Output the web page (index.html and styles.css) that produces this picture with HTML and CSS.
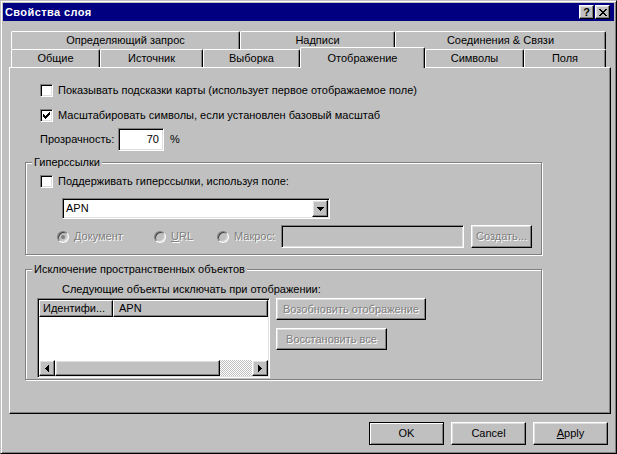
FILE: index.html
```html
<!DOCTYPE html>
<html lang="ru">

<head>
    <meta charset="UTF-8">
    <title>Свойства слоя</title>
    <link rel="stylesheet" href="styles.css">
</head>

<body>
    <div class="window">
        <div class="titlebar">
            <span class="title">Свойства слоя</span>
            <span class="title-btn help">?</span>
            <span class="title-btn">
                <svg width="8" height="7" viewBox="0 0 8 7" shape-rendering="crispEdges">
                    <path d="M0 0h2v1h-2zM6 0h2v1h-2zM1 1h2v1h-2zM5 1h2v1h-2zM2 2h4v1h-4zM3 3h2v1h-2zM2 4h4v1h-4zM1 5h2v1h-2zM5 5h2v1h-2zM0 6h2v1h-2zM6 6h2v1h-2z" fill="#000"/>
                </svg>
            </span>
        </div>

        <div class="dialog-body">
            <div class="tabs">
                <div class="tab-row back">
                    <div class="tab">Определяющий запрос</div>
                    <div class="tab">Надписи</div>
                    <div class="tab">Соединения &amp; Связи</div>
                </div>
                <div class="tab-row front">
                    <div class="tab">Общие</div>
                    <div class="tab">Источник</div>
                    <div class="tab">Выборка</div>
                    <div class="tab active">Отображение</div>
                    <div class="tab">Символы</div>
                    <div class="tab">Поля</div>
                </div>
            </div>

            <div class="panel">
                <div class="options">
                    <div class="check-row">
                        <span class="checkbox"></span>
                        <span>Показывать подсказки карты (использует первое отображаемое поле)</span>
                    </div>
                    <div class="check-row">
                        <span class="checkbox">
                            <svg width="7" height="7" viewBox="0 0 7 7" shape-rendering="crispEdges">
                                <path d="M0 2h1v3h-1zM1 3h1v3h-1zM2 4h1v3h-1zM3 3h1v3h-1zM4 2h1v3h-1zM5 1h1v3h-1zM6 0h1v3h-1z" fill="#000"/>
                            </svg>
                        </span>
                        <span>Масштабировать символы, если установлен базовый масштаб</span>
                    </div>
                    <div class="opacity-row">
                        <span class="opacity-label">Прозрачность:</span>
                        <span class="field number">70</span>
                        <span class="unit">%</span>
                    </div>
                </div>

                <div class="group links">
                    <span class="group-title">Гиперссылки</span>
                    <div class="check-row">
                        <span class="checkbox"></span>
                        <span>Поддерживать гиперссылки, используя поле:</span>
                    </div>
                    <div class="combo">
                        <span class="combo-value">APN</span>
                        <span class="button combo-btn">
                            <svg width="7" height="4" viewBox="0 0 7 4" shape-rendering="crispEdges">
                                <path d="M0 0h7v1h-7zM1 1h5v1h-5zM2 2h3v1h-3zM3 3h1v1h-1z" fill="#000"/>
                            </svg>
                        </span>
                    </div>
                    <div class="radio-row">
                        <span class="radio-item"><span class="radio selected"></span><span class="disabled">Документ</span></span>
                        <span class="radio-item"><span class="radio"></span><span class="disabled"><u>U</u>RL</span></span>
                        <span class="radio-item"><span class="radio"></span><span class="disabled">Макрос:</span></span>
                        <span class="field macro"></span>
                        <span class="button create disabled">Создать...</span>
                    </div>
                </div>

                <div class="group exclude">
                    <span class="group-title">Исключение пространственных объектов</span>
                    <div class="hint">Следующие объекты исключать при отображении:</div>
                    <div class="exclude-body">
                        <div class="listview">
                            <div class="lv-header">
                                <span class="lv-col id">Идентифи...</span>
                                <span class="lv-col">APN</span>
                            </div>
                            <div class="lv-rows"></div>
                            <div class="hscroll">
                                <span class="button arrow">
                                    <svg width="4" height="7" viewBox="0 0 4 7" shape-rendering="crispEdges">
                                        <path d="M0 3h1v1h-1zM1 2h1v3h-1zM2 1h1v5h-1zM3 0h1v7h-1z" fill="#000"/>
                                    </svg>
                                </span>
                                <span class="button thumb"></span>
                                <span class="track"></span>
                                <span class="button arrow">
                                    <svg width="4" height="7" viewBox="0 0 4 7" shape-rendering="crispEdges">
                                        <path d="M0 0h1v7h-1zM1 1h1v5h-1zM2 2h1v3h-1zM3 3h1v1h-1z" fill="#000"/>
                                    </svg>
                                </span>
                            </div>
                        </div>
                        <div class="side-buttons">
                            <span class="button resume disabled">Возобновить отображение</span>
                            <span class="button restore disabled">Восстановить все</span>
                        </div>
                    </div>
                </div>
            </div>

            <div class="dialog-buttons">
                <span class="button default">OK</span>
                <span class="button">Cancel</span>
                <span class="button"><span><u>A</u>pply</span></span>
            </div>
        </div>
    </div>
</body>
</html>
```

FILE: styles.css
```css
body {
    margin: 0;
    font-family: "Liberation Sans", Arial, sans-serif;
    font-size: 11px;
    line-height: 13px;
    color: #000;
    background: #c0c0c0;
}

.window {
    width: 617px;
    height: 454px;
    box-sizing: border-box;
    background: #c0c0c0;
    border: 1px solid;
    border-color: #c0c0c0 #000 #000 #c0c0c0;
    box-shadow: inset 1px 1px 0 #fff, inset -1px -1px 0 #808080;
    padding: 2px;
}

/* Заголовок окна */
.titlebar {
    height: 18px;
    background: #000080;
    color: #fff;
    display: flex;
    align-items: center;
    padding: 0 4px 0 2px;
}

.title {
    flex: 1;
    font-weight: bold;
    letter-spacing: 0.4px;
}

.title-btn {
    width: 15px;
    height: 14px;
    box-sizing: border-box;
    background: #c0c0c0;
    border: 1px solid;
    border-color: #fff #000 #000 #fff;
    box-shadow: inset -1px -1px 0 #808080, inset 1px 1px 0 #dfdfdf;
    display: flex;
    align-items: center;
    justify-content: center;
    color: #000;
}

.title-btn.help {
    font-weight: bold;
    margin-right: 1px;
}

.dialog-body {
    padding: 10px 3px 0 6px;
}

/* Вкладки */
.tab-row {
    display: flex;
    height: 18px;
    margin-left: 2px;
}

.tab {
    box-sizing: border-box;
    height: 18px;
    background: #c0c0c0;
    border-top: 1px solid #fff;
    border-left: 1px solid #fff;
    border-right: 1px solid #000;
    border-radius: 2px 2px 0 0;
    box-shadow: inset -1px 0 0 #808080;
    display: flex;
    align-items: center;
    justify-content: center;
    white-space: nowrap;
}

.back .tab:nth-child(1) { width: 229px; }
.back .tab:nth-child(2) { width: 155px; }
.back .tab:nth-child(3) { width: 211px; }

.front .tab:nth-child(1) { width: 89px; }
.front .tab:nth-child(2) { width: 103px; }
.front .tab:nth-child(3) { width: 97px; }
.front .tab:nth-child(4) { width: 125px; }
.front .tab:nth-child(5) { width: 99px; }
.front .tab:nth-child(6) { width: 82px; }

.tab.active {
    height: 21px;
    margin-top: -2px;
    position: relative;
    z-index: 1;
}

.panel {
    height: 347px;
    box-sizing: border-box;
    border: 1px solid;
    border-color: #fff #000 #000 #fff;
    box-shadow: inset -1px -1px 0 #808080;
    padding: 16px 0 0 15px;
}

.options {
    margin-left: 15px;
}

.check-row {
    display: flex;
    align-items: center;
    height: 13px;
    white-space: nowrap;
}

.options .check-row + .check-row {
    margin-top: 12px;
}

.checkbox {
    width: 13px;
    height: 13px;
    box-sizing: border-box;
    margin-right: 5px;
    background: #fff;
    border: 1px solid;
    border-color: #808080 #fff #fff #808080;
    box-shadow: inset 1px 1px 0 #000, inset -1px -1px 0 #dfdfdf;
    display: flex;
    align-items: center;
    justify-content: center;
}

.opacity-row {
    display: flex;
    align-items: center;
    margin-top: 6px;
    height: 23px;
}

.opacity-label {
    width: 78px;
}

/* Поля ввода */
.field {
    box-sizing: border-box;
    height: 23px;
    border: 1px solid;
    border-color: #808080 #fff #fff #808080;
    box-shadow: inset 1px 1px 0 #000, inset -1px -1px 0 #dfdfdf;
    background: #fff;
    display: flex;
    align-items: center;
}

.field.number {
    width: 46px;
    justify-content: flex-end;
    padding-right: 4px;
}

.unit {
    margin-left: 6px;
}

/* Рамки групп */
.group {
    position: relative;
    width: 517px;
    box-sizing: border-box;
    border: 1px solid #808080;
    box-shadow: 1px 1px 0 #fff, inset 1px 1px 0 #fff;
}

.group-title {
    position: absolute;
    top: -7px;
    left: 6px;
    padding: 0 2px;
    background: #c0c0c0;
    white-space: nowrap;
}

.links {
    margin-top: 11px;
    padding: 12px 0 6px 14px;
}

.combo {
    width: 268px;
    height: 21px;
    box-sizing: border-box;
    margin: 10px 0 0 22px;
    padding: 1px;
    border: 1px solid;
    border-color: #808080 #fff #fff #808080;
    box-shadow: inset 1px 1px 0 #000, inset -1px -1px 0 #dfdfdf;
    background: #fff;
    display: flex;
}

.combo-value {
    flex: 1;
    padding-left: 2px;
    display: flex;
    align-items: center;
}

.combo-btn {
    width: 16px;
    height: 17px;
}

.radio-row {
    display: flex;
    align-items: center;
    margin: 6px 0 0 17px;
    height: 23px;
}

.radio-item {
    display: flex;
    align-items: center;
}

.radio-item:nth-child(1) { width: 97px; }
.radio-item:nth-child(2) { width: 63px; }
.radio-item:nth-child(3) { width: 64px; }

.radio {
    width: 12px;
    height: 12px;
    box-sizing: border-box;
    margin-right: 5px;
    border-radius: 50%;
    border: 1px solid;
    border-color: #808080 #fff #fff #808080;
    box-shadow: inset 1px 1px 0 #404040, inset -1px -1px 0 #dfdfdf;
    background: #c0c0c0;
    display: flex;
    align-items: center;
    justify-content: center;
}

.radio.selected::after {
    content: '';
    width: 4px;
    height: 4px;
    border-radius: 50%;
    background: #808080;
}

.field.macro {
    width: 183px;
    background: #c0c0c0;
}

/* Кнопки */
.button {
    box-sizing: border-box;
    background: #c0c0c0;
    border: 1px solid;
    border-color: #fff #000 #000 #fff;
    box-shadow: inset -1px -1px 0 #808080, inset 1px 1px 0 #dfdfdf;
    display: flex;
    align-items: center;
    justify-content: center;
    white-space: nowrap;
}

.disabled {
    color: #808080;
    text-shadow: 1px 1px 0 #fff;
}

.button.create {
    width: 61px;
    height: 23px;
    margin-left: 7px;
}

.exclude {
    margin-top: 14px;
    padding: 13px 0 1px 11px;
}

.hint {
    margin-left: 25px;
    white-space: nowrap;
}

.exclude-body {
    display: flex;
    align-items: flex-start;
    margin-top: 2px;
}

.listview {
    width: 233px;
    height: 80px;
    box-sizing: border-box;
    padding: 1px;
    border: 1px solid;
    border-color: #808080 #fff #fff #808080;
    box-shadow: inset 1px 1px 0 #000, inset -1px -1px 0 #dfdfdf;
    background: #fff;
    display: flex;
    flex-direction: column;
}

.lv-header {
    display: flex;
    height: 17px;
}

.lv-col {
    flex: 1;
    box-sizing: border-box;
    background: #c0c0c0;
    border: 1px solid;
    border-color: #fff #000 #000 #fff;
    box-shadow: inset -1px -1px 0 #808080;
    padding-left: 5px;
    display: flex;
    align-items: center;
    white-space: nowrap;
}

.lv-col.id {
    flex: none;
    width: 74px;
    padding-left: 3px;
}

.lv-rows {
    flex: 1;
}

.hscroll {
    display: flex;
    height: 16px;
}

.button.arrow {
    width: 16px;
    height: 16px;
}

.button.thumb {
    width: 165px;
    height: 16px;
}

.track {
    flex: 1;
    background: repeating-conic-gradient(#fff 0 25%, #c0c0c0 0 50%) 0 0 / 2px 2px;
}

.side-buttons {
    display: flex;
    flex-direction: column;
    align-items: flex-start;
    margin-left: 6px;
}

.button.resume {
    width: 150px;
    height: 22px;
}

.button.restore {
    width: 111px;
    height: 22px;
    margin-top: 8px;
}

.dialog-buttons {
    display: flex;
    justify-content: flex-end;
    gap: 7px;
    margin: 8px 3px 0 0;
}

.dialog-buttons .button {
    width: 75px;
    height: 23px;
}

.button.default {
    border-color: #000;
    box-shadow: inset 1px 1px 0 #fff, inset -1px -1px 0 #808080;
}
```
